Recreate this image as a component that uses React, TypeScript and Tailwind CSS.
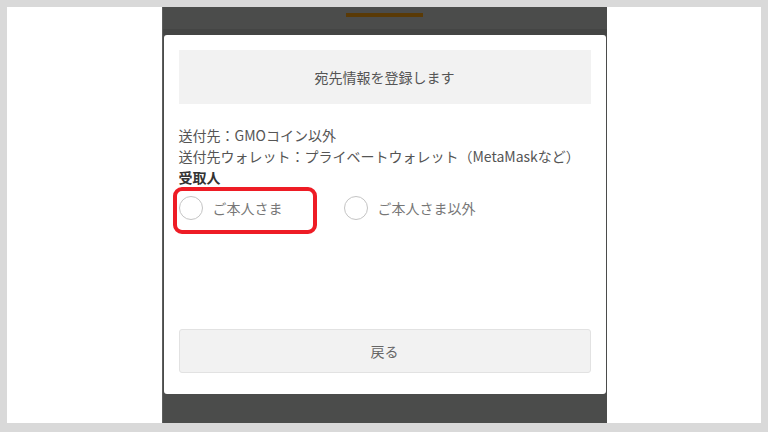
import React from "react"

const FONT = { fontFamily: '"Noto Sans CJK JP", "Noto Sans", sans-serif' }

function Radio({ label, highlight }: { label: string; highlight?: boolean }) {
  return (
    <label className="relative flex items-center gap-[10px] h-[24px]">
      <span className="w-[24px] h-[24px] rounded-full border-[1.5px] border-[#c4c4c4] bg-white flex-shrink-0" />
      <span className="text-[14px] text-[#777] leading-none">{label}</span>
      {highlight && (
        <span className="absolute left-[-6px] top-[-9px] w-[144px] h-[47px] border-[4px] border-[#ee1c25] rounded-[9px] pointer-events-none" />
      )}
    </label>
  )
}

export default function App() {
  return (
    <div className="w-[768px] h-[432px] bg-[#d9d9d9] pt-[7px] px-[7px] pb-[9px]" style={FONT}>
      <div className="h-full bg-white flex justify-center">
        {/* phone frame */}
        <div className="w-[445px] h-full bg-[#4b4c4b] border-l border-[#5e5f5e] flex flex-col">
          <div className="h-[22px] flex justify-center pt-[6px]">
            <div className="w-[77px] h-[4px] bg-[#5a3a06]" />
          </div>
          <div className="h-[6px] bg-[#444544]" />

          {/* card */}
          <div className="mx-[1px] bg-white rounded-[3px] px-[15px] pt-[15px] pb-[21px] flex flex-col h-[359px]">
            <div className="h-[54px] bg-[#f2f2f2] flex items-center justify-center text-[14px] text-[#555]">
              宛先情報を登録します
            </div>

            <div className="mt-[21px] text-[14px] leading-[21px] text-[#555]">
              <p>送付先：GMOコイン以外</p>
              <p>送付先ウォレット：プライベートウォレット（MetaMaskなど）</p>
              <p className="font-bold text-[#333]">受取人</p>
            </div>

            <div className="mt-[8px] flex items-center gap-[61px]">
              <Radio label="ご本人さま" highlight />
              <Radio label="ご本人さま以外" />
            </div>

            <button className="mt-auto h-[44px] w-full bg-[#f2f2f2] border border-[#e2e2e2] rounded-[3px] text-[14px] text-[#666]">
              戻る
            </button>
          </div>
        </div>
      </div>
    </div>
  )
}
